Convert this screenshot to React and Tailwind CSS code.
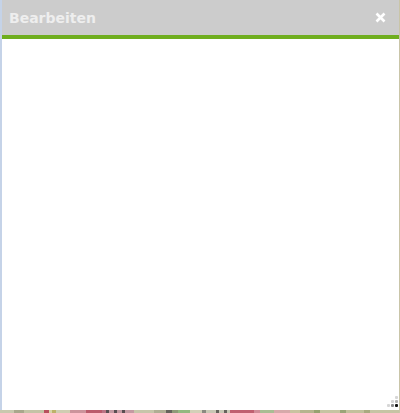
import React from "react";

const MAP = [
  [0, 14, "#c9c8ae"], [14, 10, "#a9a78c"], [24, 20, "#c4c3a6"], [44, 5, "#b8505d"], [49, 3, "#d9d4a8"],
  [52, 4, "#bdb26a"], [56, 14, "#cfcdb2"], [70, 16, "#cc949c"], [86, 16, "#bb5a6b"], [102, 4, "#bb7485"],
  [106, 3, "#5a4f52"], [109, 5, "#c49aa2"], [114, 3, "#5a4f52"], [117, 5, "#c49aa2"], [122, 3, "#5a4f52"],
  [125, 9, "#c49aa2"], [134, 20, "#c7c5aa"], [154, 12, "#b0ae94"], [166, 6, "#66635c"], [172, 6, "#8f9a78"],
  [178, 12, "#94b880"], [190, 12, "#d3d0b8"], [202, 4, "#8a8a80"], [206, 10, "#c9c7b4"], [216, 3, "#66635c"],
  [219, 5, "#c9c7b4"], [224, 3, "#66635c"], [227, 3, "#c9c7b4"], [230, 24, "#c05f70"], [254, 6, "#d08c98"],
  [260, 14, "#a9bd93"], [274, 16, "#d6a9aa"], [290, 10, "#c9c3a0"], [300, 14, "#b6b48e"], [314, 6, "#96a270"],
  [320, 20, "#c6c4a2"], [340, 6, "#9aa578"], [346, 18, "#c2c09c"], [364, 6, "#a9aa80"], [370, 29, "#c6c4a4"],
  [399, 1, "#c9c5a8"],
];

function MapStrip() {
  return (
    <svg className="block shrink-0" width="400" height="3" viewBox="0 0 400 3" shapeRendering="crispEdges">
      {MAP.map(([x, w, c]) => (
        <rect key={x} x={x} y="0" width={w} height="3" fill={c} />
      ))}
    </svg>
  );
}

function Grip() {
  const dots = [
    [8, 0, "#d6d6d6"],
    [4, 4, "#d6d6d6"],
    [8, 4, "#b4b4b4"],
    [0, 8, "#d6d6d6"],
    [4, 8, "#8c8c8c"],
    [8, 8, "#111111"],
  ];
  return (
    <svg className="absolute right-[1px] bottom-[3px]" width="11" height="11" viewBox="0 0 11 11">
      {dots.map(([x, y, c], i) => (
        <rect key={i} x={x} y={y} width="3" height="3" rx="1" fill={c} />
      ))}
    </svg>
  );
}

export default function App() {
  return (
    <div className="w-[400px] h-[413px] overflow-hidden flex flex-col">
      <div className="flex h-[410px] bg-[#c5d3e8]">
        <div className="ml-[2px] flex-1 flex flex-col min-w-0 border-r border-[#c9c5a8]">
          <div className="h-[35px] bg-[#cccccc] flex items-center justify-between pl-[7px] pr-[13px]">
            <span className="text-[14px] leading-none font-bold text-[#eeeeee] font-['DejaVu_Sans',sans-serif]">Bearbeiten</span>
            <svg width="11" height="11" viewBox="0 0 11 11">
              <path d="M1.5 1.5 L9.5 9.5 M9.5 1.5 L1.5 9.5" stroke="#ffffff" strokeWidth="2.6" />
            </svg>
          </div>
          <div className="h-[4px] bg-[#6fae1e]" />
          <div className="flex-1 bg-white relative">
            <Grip />
          </div>
        </div>
      </div>
      <MapStrip />
    </div>
  );
}
